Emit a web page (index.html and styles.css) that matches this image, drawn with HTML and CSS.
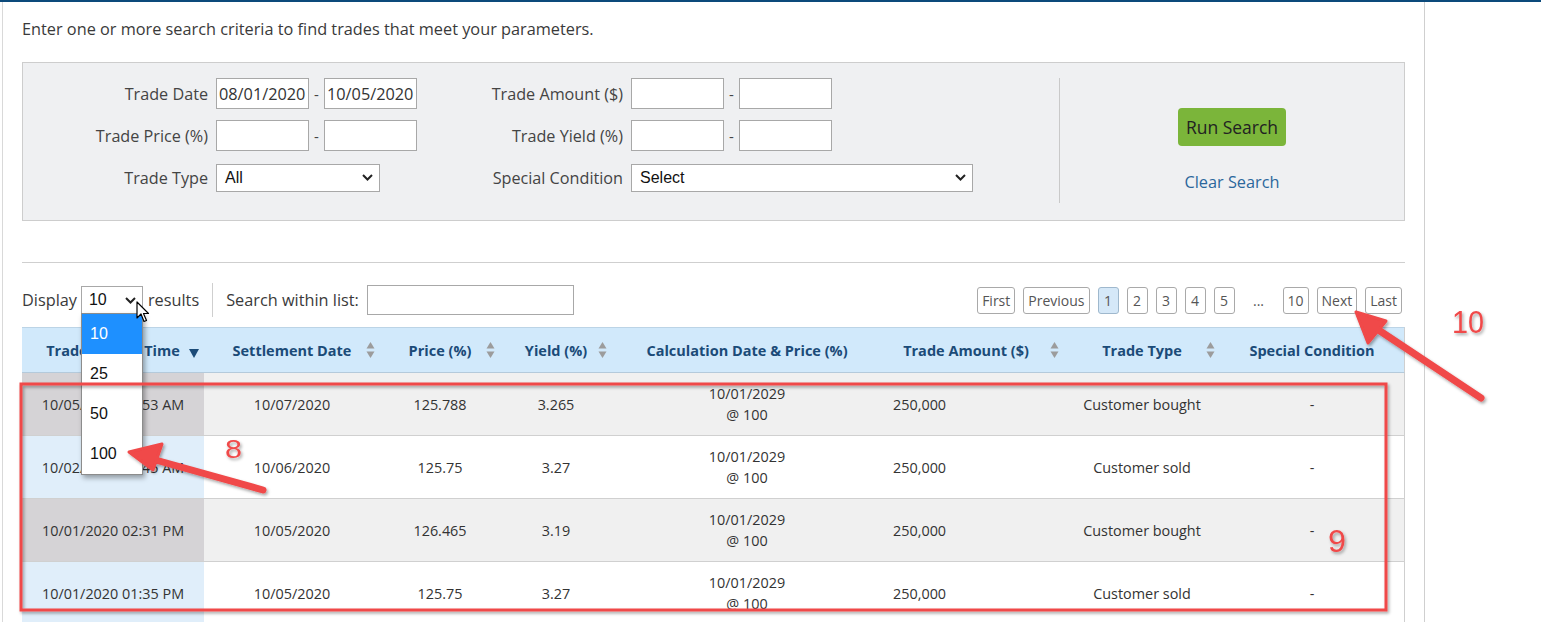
FILE: index.html
```html
<!DOCTYPE html>
<html>
<head>
<meta charset="utf-8">
<title>Trade Search</title>
<link rel="stylesheet" href="styles.css">
</head>
<body>
<div class="topline"></div>
<div class="page">
  <main class="main">
    <p class="intro">Enter one or more search criteria to find trades that meet your parameters.</p>

    <section class="panel">
      <div class="form-grid">
        <label class="lbl">Trade Date</label>
        <div class="range"><input class="inp" type="text" value="08/01/2020"><span class="dash">-</span><input class="inp" type="text" value="10/05/2020"></div>
        <label class="lbl">Trade Amount ($)</label>
        <div class="range"><input class="inp" type="text"><span class="dash">-</span><input class="inp" type="text"></div>

        <label class="lbl">Trade Price (%)</label>
        <div class="range"><input class="inp" type="text"><span class="dash">-</span><input class="inp" type="text"></div>
        <label class="lbl">Trade Yield (%)</label>
        <div class="range"><input class="inp" type="text"><span class="dash">-</span><input class="inp" type="text"></div>

        <label class="lbl">Trade Type</label>
        <div class="sel sel-type"><span>All</span><svg class="chev" width="11" height="7" viewBox="0 0 11 7"><polyline points="1,1 5.5,5.5 10,1" fill="none" stroke="#222" stroke-width="2"/></svg></div>
        <label class="lbl">Special Condition</label>
        <div class="sel sel-cond"><span>Select</span><svg class="chev" width="11" height="7" viewBox="0 0 11 7"><polyline points="1,1 5.5,5.5 10,1" fill="none" stroke="#222" stroke-width="2"/></svg></div>
      </div>
      <div class="actions">
        <button class="run" type="button">Run Search</button>
        <a class="clear" href="#">Clear Search</a>
      </div>
    </section>

    <div class="rule"></div>

    <div class="toolbar">
      <span class="tb-text">Display</span>
      <div class="sel sel-disp"><span>10</span><svg class="chev" width="11" height="7" viewBox="0 0 11 7"><polyline points="1,1 5.5,5.5 10,1" fill="none" stroke="#222" stroke-width="2"/></svg></div>
      <span class="tb-text">results</span>
      <div class="vsep"></div>
      <span class="tb-text">Search within list:</span>
      <input class="inp inp-search" type="text">
      <nav class="pager">
        <span class="pg">First</span>
        <span class="pg">Previous</span>
        <span class="pg pg-num active">1</span>
        <span class="pg pg-num">2</span>
        <span class="pg pg-num">3</span>
        <span class="pg pg-num">4</span>
        <span class="pg pg-num">5</span>
        <span class="ellip">...</span>
        <span class="pg pg-num">10</span>
        <span class="pg">Next</span>
        <span class="pg">Last</span>
      </nav>
    </div>

    <table class="trades">
      <colgroup>
        <col class="c1"><col class="c2"><col class="c3"><col class="c4"><col class="c5"><col class="c6"><col class="c7"><col class="c8">
      </colgroup>
      <thead>
        <tr>
          <th><div class="th-in"><span></span><span class="th-t">Trade Date &amp; Time</span><svg class="desc" width="10" height="9" viewBox="0 0 10 9"><polygon points="0,0 10,0 5,9" fill="#1b4b78"/></svg></div></th>
          <th><div class="th-in"><span></span><span class="th-t">Settlement Date</span><svg class="sort" width="9" height="18" viewBox="0 0 9 18"><polygon points="4.5,1 8.5,7.5 0.5,7.5" fill="#9c9c9c"/><polygon points="0.5,10.5 8.5,10.5 4.5,17" fill="#9c9c9c"/></svg></div></th>
          <th><div class="th-in"><span></span><span class="th-t">Price (%)</span><svg class="sort" width="9" height="18" viewBox="0 0 9 18"><polygon points="4.5,1 8.5,7.5 0.5,7.5" fill="#9c9c9c"/><polygon points="0.5,10.5 8.5,10.5 4.5,17" fill="#9c9c9c"/></svg></div></th>
          <th><div class="th-in"><span></span><span class="th-t">Yield (%)</span><svg class="sort" width="9" height="18" viewBox="0 0 9 18"><polygon points="4.5,1 8.5,7.5 0.5,7.5" fill="#9c9c9c"/><polygon points="0.5,10.5 8.5,10.5 4.5,17" fill="#9c9c9c"/></svg></div></th>
          <th><div class="th-in"><span></span><span class="th-t">Calculation Date &amp; Price (%)</span><span></span></div></th>
          <th><div class="th-in th-amt"><span></span><span class="th-t">Trade Amount ($)</span><svg class="sort" width="9" height="18" viewBox="0 0 9 18"><polygon points="4.5,1 8.5,7.5 0.5,7.5" fill="#9c9c9c"/><polygon points="0.5,10.5 8.5,10.5 4.5,17" fill="#9c9c9c"/></svg></div></th>
          <th><div class="th-in"><span></span><span class="th-t">Trade Type</span><svg class="sort" width="9" height="18" viewBox="0 0 9 18"><polygon points="4.5,1 8.5,7.5 0.5,7.5" fill="#9c9c9c"/><polygon points="0.5,10.5 8.5,10.5 4.5,17" fill="#9c9c9c"/></svg></div></th>
          <th><div class="th-in"><span></span><span class="th-t">Special Condition</span><span></span></div></th>
        </tr>
      </thead>
      <tbody>
        <tr class="odd">
          <td>10/05/2020 09:53 AM</td><td>10/07/2020</td><td>125.788</td><td>3.265</td><td>10/01/2029<br>@ 100</td><td class="amt">250,000</td><td>Customer bought</td><td>-</td>
        </tr>
        <tr class="even">
          <td>10/02/2020 10:45 AM</td><td>10/06/2020</td><td>125.75</td><td>3.27</td><td>10/01/2029<br>@ 100</td><td class="amt">250,000</td><td>Customer sold</td><td>-</td>
        </tr>
        <tr class="odd">
          <td>10/01/2020 02:31 PM</td><td>10/05/2020</td><td>126.465</td><td>3.19</td><td>10/01/2029<br>@ 100</td><td class="amt">250,000</td><td>Customer bought</td><td>-</td>
        </tr>
        <tr class="even">
          <td>10/01/2020 01:35 PM</td><td>10/05/2020</td><td>125.75</td><td>3.27</td><td>10/01/2029<br>@ 100</td><td class="amt">250,000</td><td>Customer sold</td><td>-</td>
        </tr>
      </tbody>
    </table>
  </main>
  <aside class="side"></aside>
</div>

<ul class="dropdown">
  <li class="opt sel-opt">10</li>
  <li class="opt">25</li>
  <li class="opt">50</li>
  <li class="opt">100</li>
</ul>

<svg class="cursor" width="14" height="22" viewBox="0 0 14 22"><path d="M1,1 L1,17 L5,13 L8,20.5 L10.5,19.5 L7.5,12.5 L12.5,12.5 Z" fill="#fff" stroke="#000" stroke-width="1.2" stroke-linejoin="round"/></svg>

<svg class="annot" width="1541" height="622" viewBox="0 0 1541 622">
  <defs>
    <filter id="sh" x="-5%" y="-5%" width="110%" height="110%">
      <feDropShadow dx="1.5" dy="2" stdDeviation="1.6" flood-color="#000" flood-opacity="0.35"/>
    </filter>
  </defs>
  <g filter="url(#sh)" fill="none" stroke="#f04848">
    <rect x="21" y="384" width="1365" height="226" stroke-width="3"/>
  </g>
  <g filter="url(#sh)" fill="#f04848" stroke="#f04848" stroke-linecap="round" stroke-linejoin="round">
    <line x1="263" y1="490" x2="152" y2="459" stroke-width="7"/>
    <polygon points="129,452 162,444 153,470" stroke-width="3"/>
    <line x1="1481" y1="398" x2="1374" y2="327" stroke-width="7"/>
    <polygon points="1356,312 1386,321 1368,343" stroke-width="3"/>
  </g>
  <g filter="url(#sh)" fill="#f04848" font-family="Liberation Sans, Arial, sans-serif">
    <text x="225" y="458" font-size="26" textLength="17" lengthAdjust="spacingAndGlyphs">8</text>
    <text x="1452" y="333" font-size="32" textLength="32" lengthAdjust="spacingAndGlyphs">10</text>
    <text x="1328" y="552" font-size="32" textLength="18" lengthAdjust="spacingAndGlyphs">9</text>
  </g>
</svg>
</body>
</html>
```

FILE: styles.css
```css
* { box-sizing: border-box; }

html, body {
  margin: 0;
  padding: 0;
  height: 622px;
  overflow: hidden;
  background: #fff;
}

body {
  position: relative;
  font-family: "Open Sans", "Liberation Sans", sans-serif;
  color: #333;
}

.topline {
  height: 2px;
  background: #0c4a7b;
}

.page {
  display: flex;
  height: 620px;
  overflow: hidden;
}

.main {
  width: 1423px;
  margin-left: 2px;
  border-left: 1px solid #d9d9d9;
  border-right: 1px solid #cfcfcf;
  padding: 17px 19px 0 19px;
}

.side {
  flex: 1;
}

.intro {
  margin: 0;
  font-size: 16.3px;
  line-height: 20px;
  color: #3a3a3a;
}

/* ---------- search panel ---------- */
.panel {
  margin-top: 23px;
  display: flex;
  background: #eff0f2;
  border: 1px solid #cdcdcd;
  padding: 15px 0 17px 0;
}

.form-grid {
  width: 1036px;
  display: grid;
  grid-template-columns: 185px 246px 153px 1fr;
  grid-auto-rows: 31px;
  column-gap: 8px;
  row-gap: 11px;
  align-items: center;
  padding-bottom: 10px;
}

.lbl {
  text-align: right;
  font-size: 16.2px;
  color: #444;
  white-space: nowrap;
}

.range {
  display: flex;
  align-items: center;
}

.inp {
  width: 93px;
  height: 31px;
  margin: 0;
  border: 1px solid #a8a8a8;
  border-radius: 0;
  background: #fff;
  padding: 0 2px;
  font-family: "Open Sans", sans-serif;
  font-size: 16.3px;
  color: #333;
  outline: none;
}

.dash {
  width: 15px;
  text-align: center;
  font-size: 15px;
  color: #444;
}

.sel {
  display: flex;
  align-items: center;
  justify-content: space-between;
  height: 28px;
  background: #fff;
  border: 1px solid #a8a8a8;
  padding: 0 6px 0 8px;
  font-family: "Liberation Sans", Arial, sans-serif;
  font-size: 16px;
  color: #111;
}

.sel-type { width: 164px; }
.sel-cond { width: 342px; }

.actions {
  flex: 1;
  border-left: 1px solid #c9c9c9;
  display: flex;
  flex-direction: column;
  align-items: center;
  padding-top: 30px;
}

.run {
  height: 38px;
  padding: 0 8px;
  border: none;
  border-radius: 4px;
  background: #7bb53a;
  font-family: "Open Sans", sans-serif;
  font-size: 17.5px;
  color: #222;
}

.clear {
  margin-top: 26px;
  font-size: 16.3px;
  line-height: 20px;
  color: #2b679c;
  text-decoration: none;
}

.rule {
  margin-top: 41px;
  border-top: 1px solid #cfcfcf;
}

/* ---------- toolbar ---------- */
.toolbar {
  margin-top: 20px;
  height: 34px;
  display: flex;
  align-items: center;
}

.tb-text {
  font-size: 16.3px;
  color: #3a3a3a;
}

.sel-disp {
  width: 62px;
  height: 29px;
  margin: 0 5px 0 4px;
  padding: 0 6px 0 7px;
}

.vsep {
  width: 1px;
  height: 34px;
  background: #cfcfcf;
  margin: 0 13px 0 13px;
}

.inp-search {
  width: 207px;
  height: 30px;
  margin-left: 8px;
}

.pager {
  margin-left: auto;
  margin-right: 3px;
  display: flex;
  align-items: center;
  gap: 8px;
}

.pg {
  height: 27px;
  line-height: 25px;
  padding: 0 4px;
  border: 1px solid #a9a9a9;
  border-radius: 3px;
  background: #fff;
  font-size: 14px;
  color: #555;
  text-align: center;
}

.pg-num { min-width: 21px; }

.pg.active {
  background: #d5e8f8;
  border-color: #9fb8cd;
}

.ellip {
  width: 32px;
  text-align: center;
  font-size: 14px;
  color: #555;
}

/* ---------- table ---------- */
.trades {
  margin-top: 10px;
  width: 1383px;
  table-layout: fixed;
  border-collapse: separate;
  border-spacing: 0;
}

.c1 { width: 182px; }
.c2 { width: 176px; }
.c3 { width: 120px; }
.c4 { width: 112px; }
.c5 { width: 270px; }
.c6 { width: 182px; }
.c7 { width: 156px; }
.c8 { width: 185px; }

.trades th {
  height: 46px;
  padding: 0;
  background: #d1e9fb;
  border-top: 1px solid #bcd4e6;
  border-bottom: 1px solid #b4cadb;
  font-size: 14.5px;
  font-weight: 700;
  color: #1b4b78;
}

.trades th:last-child,
.trades td:last-child {
  border-right: 1px solid #cfcfcf;
}

.th-in {
  display: grid;
  grid-template-columns: 20px 1fr 20px;
  align-items: center;
  justify-items: center;
}

.th-in.th-amt {
  grid-template-columns: 6px 1fr 20px;
}

.th-t { white-space: nowrap; }

.desc { margin-top: 7px; }

.trades td {
  height: 63px;
  padding: 0;
  border-bottom: 1px solid #d0d0d0;
  font-size: 14.4px;
  line-height: 21px;
  text-align: center;
  color: #333;
}

.trades td.amt {
  text-align: left;
  padding-left: 11px;
}

.odd td { background: #f0f0f0; }
.odd td:first-child { background: #d5d3d6; }
.even td { background: #fff; }
.even td:first-child { background: #e0eefa; }

/* ---------- overlays ---------- */
.dropdown {
  position: absolute;
  left: 81px;
  top: 313px;
  width: 62px;
  margin: 0;
  padding: 0;
  list-style: none;
  background: #fff;
  border: 1px solid #8c8c8c;
  box-shadow: 2px 3px 5px rgba(0, 0, 0, 0.35);
}

.opt {
  height: 40px;
  line-height: 40px;
  padding-left: 8px;
  font-family: "Liberation Sans", Arial, sans-serif;
  font-size: 16px;
  color: #111;
}

.opt.sel-opt {
  background: #1e90ff;
  color: #fff;
}

.cursor {
  position: absolute;
  left: 136px;
  top: 301px;
}

.annot {
  position: absolute;
  left: 0;
  top: 0;
  pointer-events: none;
}
```
